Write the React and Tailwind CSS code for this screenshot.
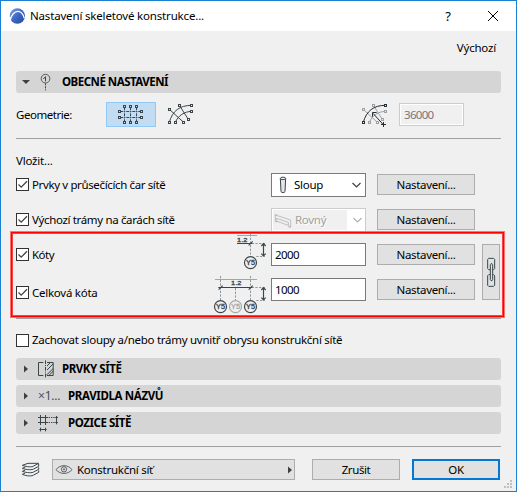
import React from "react";

const ink = "#3b464b";

/* Icon canvases use three drawing units per pixel. */
function Icon({ box, children, color = ink, className = "" }) {
  const [, , w, h] = box;
  return (
    <svg width={w / 3} height={h / 3} viewBox={box.join(" ")} fill="none" stroke={color} strokeWidth="3" className={"block shrink-0 " + className}>
      {children}
    </svg>
  );
}

/* Centres a node on the middle of a pixel so that its outline stays crisp. */
const snap = (v) => Math.floor(v / 3) * 3 + 1.5;

function Nodes({ at, color, fill = "#f0f0f0" }) {
  return at.map(([x, y]) => <rect key={x + "-" + y} x={snap(x) - 3} y={snap(y) - 3} width="6" height="6" stroke={color} fill={fill} />);
}

function Logo() {
  return (
    <Icon box={[27, 18, 51, 54]} color="none">
      <defs>
        <linearGradient id="globe" x1="0" y1="0" x2="1" y2="1">
          <stop offset="0" stopColor="#7fa3e8" />
          <stop offset=".5" stopColor="#3c68c6" />
          <stop offset="1" stopColor="#234a9e" />
        </linearGradient>
      </defs>
      <circle cx="52" cy="45" r="23" fill="url(#globe)" />
      <path d="M30 60C33 42 44 30 55 31C66 32 70 41 73 52" stroke="#fff" strokeWidth="4" />
    </Icon>
  );
}

function GridIcon() {
  return (
    <Icon box={[354, 117, 78, 66]}>
      <path d="M373.5 127V170M391.5 127V170M409.5 127V170" strokeDasharray="9 3 3 3" />
      <path d="M361 139.5H422M361 157.5H422" strokeDasharray="9 3 3 3" />
      <Nodes fill="#c1dcf3" at={[[373, 124], [391, 124], [409, 124], [358, 139], [358, 157], [425, 139], [425, 157], [373, 173], [391, 173], [409, 173]]} />
    </Icon>
  );
}

function CurvedIcon() {
  return (
    <Icon box={[501, 114, 81, 69]} className="ml-[11px]">
      <path d="M508 133L551 172M538 121L565 163M508 172C517 138 539 121 575 121M526 172C535 151 553 140 575 139" />
      <Nodes at={[[508, 133], [538, 121], [574, 121], [574, 139], [565, 163], [508, 172], [526, 172], [550, 172]]} />
    </Icon>
  );
}

function RadiusIcon() {
  return (
    <Icon box={[312, 114, 81, 75]} className="mt-0.5">
      <g stroke="#9da1a3">
        <path d="M319 133L361 172M349 121L376 163M337 172C346 151 364 140 385 139" />
        <Nodes color="#9da1a3" at={[[319, 133], [349, 121], [385, 139], [376, 163], [337, 172], [361, 172]]} />
      </g>
      <path d="M319 172C328 138 350 121 385 121M348 145L378 178M346.5 155V142.5H359M372 178.5H387M379.5 171V186" stroke="#252e34" />
      <Nodes color="#252e34" at={[[319, 172], [385, 121]]} />
    </Icon>
  );
}

function MarkerIcon() {
  return (
    <Icon box={[120, 24, 33, 54]}>
      <circle cx="136.5" cy="41" r="13" strokeWidth="2.5" />
      <path d="M130 42L136.5 35V49" />
      <path d="M136.5 55V76" strokeDasharray="6 3" />
    </Icon>
  );
}

function ColumnIcon() {
  return (
    <Icon box={[66, 93, 27, 54]}>
      <path d="M70 100L72 140C75 144 82 144 84 140L86 100" fill="#e3e6e7" />
      <ellipse cx="78" cy="100" rx="8" ry="3.5" fill="#fff" />
    </Icon>
  );
}

function BeamIcon() {
  return (
    <Icon box={[51, 198, 54, 48]} color="#b2b5b6">
      <path d="M55 207L101 222V243L94 239V229L58 217V227L54 224M55 207V223M60 226L94 238M53 207H61M53 227H62M94 243H102" strokeWidth="2.5" />
    </Icon>
  );
}

function Level({ x, y, muted }) {
  const c = muted ? "#a7aaab" : ink;
  return (
    <g stroke={c}>
      <circle cx={x} cy={y} r="18" strokeWidth="3.5" />
      <text x={x} y={y + 7} textAnchor="middle" textLength="27" lengthAdjust="spacingAndGlyphs" fontFamily="Liberation Sans, sans-serif" fontSize="20" fill={c} strokeWidth="1">Y5</text>
    </g>
  );
}

function DimIcon() {
  return (
    <Icon box={[120, 18, 96, 108]} className="-mt-[3px] self-start">
      <path d="M126 22.5H186" stroke="#a3a6a8" />
      <path d="M166.5 18V84M170 46.5H210M184 85.5H210" stroke="#92979a" strokeDasharray="7 4" />
      <path d="M126 46.5H172M161 52L173 40M205.5 47V84M199 54L205.5 47L212 54M199 77L205.5 84L212 77" strokeWidth="3.5" />
      <text x="126" y="41" textLength="31" lengthAdjust="spacingAndGlyphs" fontFamily="Liberation Sans, sans-serif" fontSize="18" fill={ink} stroke={ink} strokeWidth="1">1.2</text>
      <Level x={166.5} y={104} />
    </Icon>
  );
}

function TotalDimIcon() {
  return (
    <Icon box={[54, 144, 162, 114]} className="mt-1 self-start">
      <path d="M60 154.5H186" stroke="#a3a6a8" />
      <path d="M76.5 144V216M121.5 180V216M166.5 144V216M170 178.5H210M184 217.5H210" stroke="#92979a" strokeDasharray="7 4" />
      <path d="M70 178.5H172M71 185L83 173M161 185L173 173M205.5 179V216M199 186L205.5 179L212 186M199 209L205.5 216L212 209" strokeWidth="3.5" />
      <text x="108" y="172" textLength="31" lengthAdjust="spacingAndGlyphs" fontFamily="Liberation Sans, sans-serif" fontSize="18" fill={ink} stroke={ink} strokeWidth="1">1.2</text>
      <Level x={76.5} y={236} />
      <Level x={121.5} y={236} muted />
      <Level x={166.5} y={236} />
    </Icon>
  );
}

function LinkIcon() {
  return (
    <Icon box={[438, 84, 30, 93]}>
      <path d="M451 122H446L443 119V91L446 88H461L464 91V119L461 122H458" />
      <path d="M451 137H446L443 140V169L446 172H461L464 169V140L461 137H458" />
      <path d="M451 107L453 104H456L458 107V152L456 155H453L451 152Z" />
    </Icon>
  );
}

function ElementsIcon() {
  return (
    <Icon box={[111, 105, 54, 54]}>
      <path d="M130 112.5H115.5V151.5H130" />
      <path d="M136.5 106V158" strokeDasharray="11 3 3 3" />
      <path d="M141 112.5H159.5V151.5H141V149L160 130M141 135L160 116M141 123L152 112M146 152L160 138" />
    </Icon>
  );
}

function PositionIcon() {
  return (
    <Icon box={[114, 267, 66, 54]}>
      <path d="M124.5 270V300M139.5 270V300M117 277.5H147M117 292.5H147M124.5 308V319M139.5 308V319M121 313.5H143M172.5 273V298M169 277.5H177M169 292.5H177" />
      <path d="M149 277.5H171M149 292.5H171" strokeDasharray="4 3" />
    </Icon>
  );
}

function LayersIcon({ className }) {
  return (
    <Icon box={[63, 66, 57, 48]} className={className}>
      <path d="M67 76L84 70H116L101 78C97 82 80 81 67 76Z" />
      <path d="M67 85C80 90 98 90 101 87L116 79V72M67 94C80 99 98 99 101 96L116 88V82M67 103C80 109 98 109 101 105L116 97V91M67 85L76 81M67 94L76 90M67 103L76 99" />
    </Icon>
  );
}

function EyeIcon() {
  return (
    <Icon box={[165, 72, 54, 36]} color="#596267">
      <path d="M168 89C180 73 204 73 216 89C204 104 180 104 168 89Z" />
      <circle cx="192" cy="88" r="8" />
      <circle cx="192" cy="88" r="2" />
    </Icon>
  );
}

function Arrow({ down }) {
  return (
    <svg width="8" height="8" viewBox="0 0 8 8" fill="#404040" className="block shrink-0">
      {down ? <path d="M0 2H8L4 6Z" /> : <path d="M2 0.5L6 4L2 7.5Z" />}
    </svg>
  );
}

function Chevron({ color = "#404040" }) {
  return (
    <svg width="9" height="6" viewBox="0 0 9 6" fill="none" stroke={color} strokeWidth="1.2" className="block">
      <path d="M.5 1L4.5 5L8.5 1" />
    </svg>
  );
}

function Section({ icon, children, down, iconWidth, className = "tracking-[-0.45px]" }) {
  return (
    <div className="flex h-[22px] shrink-0 items-center rounded-[3px] bg-[#d5d5d5] pl-1.5">
      <Arrow down={down} />
      <div className={"flex shrink-0 items-center pl-[7px] " + iconWidth}>{icon}</div>
      <span className={"font-bold " + className}>{children}</span>
    </div>
  );
}

function Check({ label, checked = true, className = "tracking-[-0.3px]" }) {
  return (
    <label className="flex items-center gap-[3px]">
      <span className="flex size-[13px] shrink-0 items-center justify-center border border-[#333] bg-white">
        {checked && (
          <svg width="11" height="11" viewBox="0 0 11 11" fill="none" stroke="#444" strokeWidth="1.3">
            <path d="M1.5 5.5L4.2 8.2L10 2.3" />
          </svg>
        )}
      </span>
      <span className={className}>{label}</span>
    </label>
  );
}

function Button({ children, className = "w-[98px] border border-[#adadad]" }) {
  return <button className={"flex h-[21px] shrink-0 items-center justify-center bg-[#e1e1e1] " + className}>{children}</button>;
}

function Settings() {
  return (
    <Button>
      <span className="tracking-[-0.33px]">Nastavení...</span>
    </Button>
  );
}

function Value({ children }) {
  return <div className="flex h-[23px] w-[95px] shrink-0 items-center border border-[#7a7a7a] bg-white pl-[3px] tracking-[-0.6px]">{children}</div>;
}

export default function App() {
  return (
    <div className="relative flex h-[492px] w-[517px] flex-col overflow-hidden border border-[#1a80d2] bg-[#f0f0f0] font-['Noto_Sans','Open_Sans',sans-serif] text-[11.5px] leading-4 whitespace-nowrap text-black">
      <header className="flex h-[30px] shrink-0 items-center bg-white pl-2">
        <Logo />
        <span className="ml-1 flex-1 tracking-[-0.17px]">Nastavení skeletové konstrukce...</span>
        <span className="mr-[37px] text-[13px]">?</span>
        <svg width="10" height="10" viewBox="0 0 10 10" stroke="#000" className="mr-[18px]">
          <path d="M0 0L10 10M10 0L0 10" />
        </svg>
      </header>

      <main className="flex flex-1 flex-col pr-[15px] pl-[15px]">
        <div className="flex h-10 items-center justify-end pr-[5px] pb-[7px]">
          <span className="tracking-[-0.2px]">Výchozí</span>
        </div>
        <Section down icon={<MarkerIcon />} iconWidth="w-[32px] [&>svg]:ml-[3px]" className="tracking-[-0.5px]">OBECNÉ NASTAVENÍ</Section>
        <div className="flex h-[46px] shrink-0 items-center border-b border-[#a0a0a0] pb-0.5">
          <span className="w-[90px] tracking-[-0.45px]">Geometrie:</span>
          <div className="flex h-[25px] w-[50px] items-end justify-center border border-[#90c8f6] bg-[#c1dcf3]">
            <GridIcon />
          </div>
          <CurvedIcon />
          <span className="flex-1" />
          <RadiusIcon />
          <div className="mr-[37px] ml-[11px] flex h-[23px] w-[65px] items-center border border-[#ccc] pl-1 tracking-[-0.7px] text-[#777] outline-1 -outline-offset-2 outline-white">36000</div>
        </div>

        <div className="flex h-[28px] shrink-0 items-center pt-[15px] tracking-[-0.2px]">Vložit...</div>

        <div className="flex h-[35px] shrink-0 items-center">
          <div className="flex-1"><Check label="Prvky v průsečících čar sítě" className="tracking-[-0.37px]" /></div>
          <div className="mt-px flex h-6 w-[95px] items-center border border-[#7a7a7a] bg-white pl-[7px]">
            <ColumnIcon />
            <span className="ml-1.5 flex-1 tracking-[-0.25px]">Sloup</span>
            <span className="mr-1"><Chevron /></span>
          </div>
          <div className="mr-[26px] ml-[11px]"><Settings /></div>
        </div>
        <div className="flex h-[35px] shrink-0 items-center">
          <div className="flex-1"><Check label="Výchozí trámy na čarách sítě" className="tracking-[-0.35px]" /></div>
          <div className="mt-px flex h-6 w-[95px] items-center border border-[#ccc] bg-white p-px text-[#a0a0a0]">
            <div className="flex h-5 w-[74px] items-center bg-[#f0f0f0] pl-px">
              <BeamIcon />
              <span className="ml-[3px] tracking-[-0.3px] [text-shadow:1px_1px_0_#fff]">Rovný</span>
            </div>
            <span className="ml-1.5"><Chevron color="#b0b0b0" /></span>
          </div>
          <div className="mr-[26px] ml-[11px]"><Settings /></div>
        </div>

        <div className="flex h-[82px] shrink-0 border-b border-[#a0a0a0]">
          <div className="flex flex-1 flex-col">
            <div className="flex h-[35px] items-center">
              <div className="flex-1"><Check label="Kóty" className="tracking-[-0.5px]" /></div>
              <DimIcon />
              <div className="ml-1"><Value>2000</Value></div>
              <div className="ml-[11px]"><Settings /></div>
            </div>
            <div className="flex h-[35px] items-center">
              <div className="flex-1 pt-1.5"><Check label="Celková kóta" className="tracking-[-0.25px]" /></div>
              <TotalDimIcon />
              <div className="ml-1"><Value>1000</Value></div>
              <div className="ml-[11px]"><Settings /></div>
            </div>
          </div>
          <button className="mt-[7px] mr-px ml-[7px] flex h-14 w-[18px] items-center justify-center border border-[#adadad] bg-[#e1e1e1]">
            <LinkIcon />
          </button>
        </div>

        <div className="flex h-[39px] shrink-0 items-center pt-[3px]">
          <Check checked={false} label="Zachovat sloupy a/nebo trámy uvnitř obrysu konstrukční sítě" className="tracking-[-0.28px]" />
        </div>
        <div className="flex flex-col gap-[5px]">
          <Section icon={<ElementsIcon />} iconWidth="w-[32px]">PRVKY SÍTĚ</Section>
          <Section icon={<span className="pl-px font-['Open_Sans'] text-[12px] tracking-[-0.2px] text-[#3b464b]">×1...</span>} iconWidth="w-[38px]" className="tracking-[-0.35px]">PRAVIDLA NÁZVŮ</Section>
          <Section icon={<PositionIcon />} iconWidth="w-[38px]">POZICE SÍTĚ</Section>
        </div>

        <div className="mt-3 h-px shrink-0 bg-[#a0a0a0]" />
        <footer className="mt-3 flex h-[21px] items-center pr-px">
          <LayersIcon className="ml-[5px]" />
          <button className="ml-3 flex h-[21px] w-[243px] shrink-0 items-center border border-[#adadad] bg-[#e1e1e1] pl-0.5">
            <EyeIcon />
            <span className="ml-1 flex-1 text-left tracking-[-0.27px]">Konstrukční síť</span>
            <Arrow />
          </button>
          <span className="flex-1" />
          <Button className="w-[88px] border border-[#adadad] tracking-[-0.4px]">Zrušit</Button>
          <Button className="ml-3 w-[88px] border-2 border-[#0078d7] tracking-[-0.3px]">OK</Button>
        </footer>
      </main>

      <div className="pointer-events-none absolute top-[231px] left-[10px] h-[85px] w-[493px] border border-[#f00] shadow-[0_0_0_1px_#ff7070,inset_0_0_0_1px_#ff4040]" />
      <svg width="9" height="9" viewBox="0 0 9 9" fill="#bfbfbf" className="absolute right-[3px] bottom-[2px]">
        <path d="M6 0h2v2h-2zM3 3h2v2h-2zM6 3h2v2h-2zM0 6h2v2h-2zM3 6h2v2h-2zM6 6h2v2h-2z" />
      </svg>
    </div>
  );
}
